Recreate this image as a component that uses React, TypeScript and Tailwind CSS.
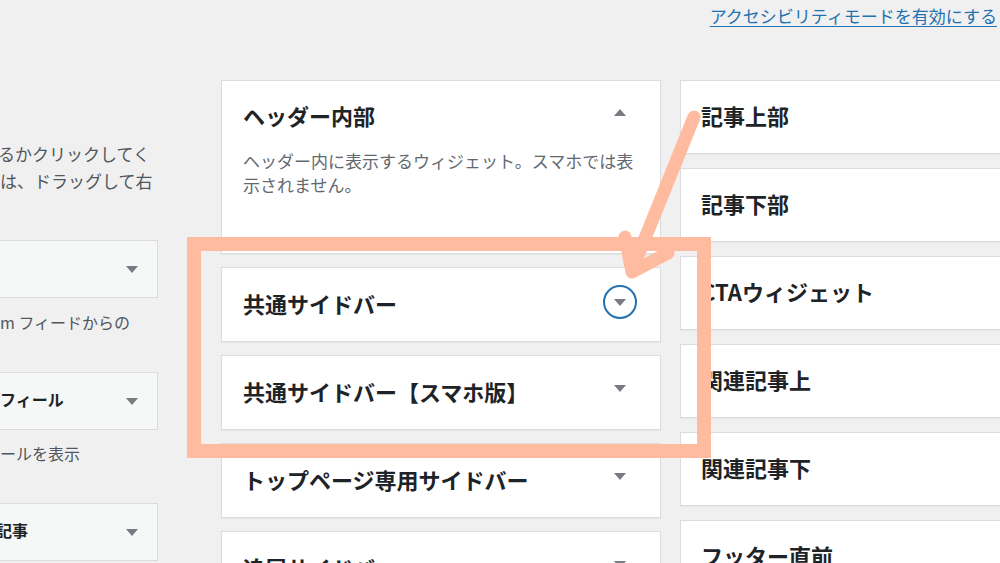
const jp = "font-['Noto_Sans_CJK_JP','Noto_Sans',sans-serif]";

const Caret = ({ up = false }: { up?: boolean }) =>
  up ? (
    <div className="w-0 h-0 border-x-[6px] border-x-transparent border-b-[7px] border-b-[#787c82]" />
  ) : (
    <div className="w-0 h-0 border-x-[6px] border-x-transparent border-t-[7px] border-t-[#787c82]" />
  );

const LeftBox = ({ title, shift = "" }: { title: string; shift?: string }) => (
  <div className="h-[58px] -ml-[20px] w-[178px] bg-[#f6f7f7] border border-[#dcdcde] flex items-center justify-between pr-[19px]">
    <span className={`pl-[19px] mb-[4px] text-[16px] font-bold text-[#1d2327] whitespace-nowrap ${shift}`}>
      {title}
    </span>
    <Caret />
  </div>
);

const SidebarBox = ({ title, circled = false }: { title: string; circled?: boolean }) => (
  <div className="h-[75px] shrink-0 bg-white border border-[#dcdcde] shadow-[0_1px_1px_rgba(0,0,0,0.04)] flex items-center justify-between pl-[21px] pr-[34px]">
    <span className="mb-[4px] text-[22px] font-bold text-[#1d2327] leading-[28px] whitespace-nowrap">
      {title}
    </span>
    {circled ? (
      <div className="w-[34px] h-[34px] -mr-[11px] -mt-[6px] rounded-full border-2 border-[#2271b1] flex items-center justify-center">
        <div className="mt-[2px]">
          <Caret />
        </div>
      </div>
    ) : (
      <div className="-mt-[8px]">
        <Caret />
      </div>
    )}
  </div>
);

const RightBox = ({ title }: { title: string }) => (
  <div className="h-[74px] shrink-0 bg-white border border-[#dcdcde] shadow-[0_1px_1px_rgba(0,0,0,0.04)] flex items-center pl-[20px]">
    <span className="mb-[5px] text-[22px] font-bold text-[#1d2327] leading-[28px] whitespace-nowrap">
      {title}
    </span>
  </div>
);

export default function App() {
  return (
    <div className={`relative w-[1000px] h-[563px] overflow-hidden bg-[#f0f0f0] ${jp}`}>
      {/* top link */}
      <div className="h-[80px] pt-[3px] pr-[3px] text-right">
        <a className="text-[17px] leading-[26px] text-[#2271b1] underline underline-offset-[3px]">
          アクセシビリティモードを有効にする
        </a>
      </div>

      <div className="flex">
        {/* available widgets (cut off on the left) */}
        <div className="w-[158px] shrink-0 flex flex-col">
          <div className="pt-[60px] text-[17px] leading-[27px] text-[#50575e] whitespace-nowrap">
            <div className="-ml-[2px]">るかクリックしてく</div>
            <div>は、ドラッグして右</div>
          </div>
          <div className="mt-[46px]">
            <LeftBox title="" />
          </div>
          <div className="mt-[11px] text-[16px] leading-[27px] text-[#50575e] whitespace-nowrap">
            m フィードからの
          </div>
          <div className="mt-[36px]">
            <LeftBox title="プロフィール" shift="-ml-[32px]" />
          </div>
          <div className="mt-[10px] text-[16px] leading-[27px] text-[#50575e] whitespace-nowrap">
            ールを表示
          </div>
          <div className="mt-[36px]">
            <LeftBox title="新着記事" shift="-ml-[36px]" />
          </div>
        </div>

        {/* middle sidebars */}
        <div className="ml-[63px] w-[440px] shrink-0 flex flex-col gap-[13px]">
          <div className="h-[174px] shrink-0 bg-white border border-[#dcdcde] shadow-[0_1px_1px_rgba(0,0,0,0.04)] pl-[21px] pr-[34px] pt-[20px]">
            <div className="flex items-center justify-between">
              <span className="text-[22px] font-bold text-[#1d2327] leading-[28px]">
                ヘッダー内部
              </span>
              <div className="-mt-[6px]">
                <Caret up />
              </div>
            </div>
            <p className="mt-[20px] text-[17px] leading-[24px] text-[#646970] w-[400px]">
              ヘッダー内に表示するウィジェット。スマホでは表示されません。
            </p>
          </div>
          <SidebarBox title="共通サイドバー" circled />
          <SidebarBox title="共通サイドバー【スマホ版】" />
          <SidebarBox title="トップページ専用サイドバー" />
          <SidebarBox title="追尾サイドバー" />
        </div>

        {/* right sidebars */}
        <div className="ml-[19px] w-[340px] shrink-0 flex flex-col gap-[14px]">
          <RightBox title="記事上部" />
          <RightBox title="記事下部" />
          <RightBox title="CTAウィジェット" />
          <RightBox title="関連記事上" />
          <RightBox title="関連記事下" />
          <RightBox title="フッター直前" />
        </div>
      </div>

      {/* annotation overlay */}
      <svg
        className="absolute inset-0 pointer-events-none"
        width="1000"
        height="563"
        viewBox="0 0 1000 563"
      >
        <rect
          x="194"
          y="244"
          width="510"
          height="207"
          fill="none"
          stroke="#ffbb9f"
          strokeWidth="14"
        />
        <line
          x1="694"
          y1="117"
          x2="633"
          y2="268"
          stroke="#ffbb9f"
          strokeWidth="13"
          strokeLinecap="round"
        />
        <polyline
          points="625,237 632,272 668,253"
          fill="none"
          stroke="#ffbb9f"
          strokeWidth="13"
          strokeLinecap="round"
          strokeLinejoin="round"
        />
      </svg>
    </div>
  );
}
